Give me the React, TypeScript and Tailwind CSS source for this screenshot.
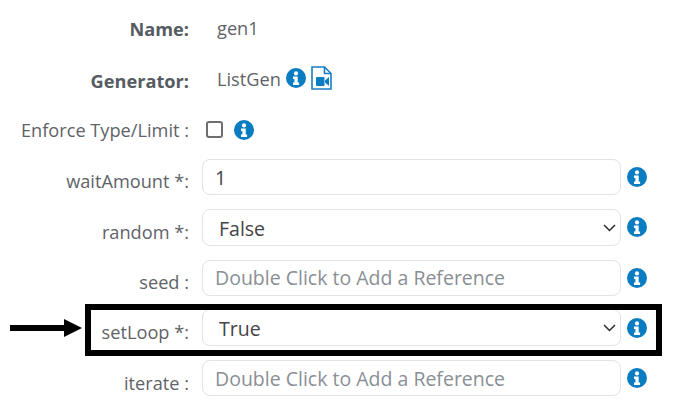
import React from 'react';

const Info = ({ className = '' }: { className?: string }) => (
  <svg viewBox="0 0 20 20" className={`w-[20px] h-[20px] shrink-0 ${className}`}>
    <circle cx="10" cy="10" r="10" fill="#0a7cc1" />
    <circle cx="10" cy="5.4" r="2.1" fill="white" />
    <path d="M7 8.6h4.7v6h1.4v2.3H7v-2.3h1.4v-3.7H7z" fill="white" />
  </svg>
);

const VideoFile = ({ className = '' }: { className?: string }) => (
  <svg viewBox="0 0 21 24" className={`w-[21px] h-[24px] shrink-0 ${className}`}>
    <path d="M1 1h12.5L20 7.5V23H1z" fill="white" stroke="#1a7cc4" strokeWidth="1.6" />
    <path d="M13.5 1v6.5H20" fill="none" stroke="#1a7cc4" strokeWidth="1.6" />
    <rect x="5" y="11" width="8.5" height="9" rx="1" fill="#0a7cc1" />
    <path d="M14 14.5l4-3.5v9l-4-3.5z" fill="#0a7cc1" />
  </svg>
);

const Label = ({ children, bold, field }: { children: React.ReactNode; bold?: boolean; field?: boolean }) => (
  <div className={`w-[189px] shrink-0 text-right ${field ? 'pt-[10px]' : ''} ${bold ? 'font-bold text-[#555b61]' : 'text-[#5f6368]'}`}>
    {children}
  </div>
);

const InputRow = ({ label, value, placeholder }: { label: string; value?: string; placeholder?: string }) => (
  <div className="flex items-center h-[36px] mb-[14.3px]">
    <Label field>{label}</Label>
    <input
      readOnly
      value={value}
      placeholder={placeholder}
      className="ml-[13px] w-[419px] h-[36px] rounded-[8px] border border-[#e3e3e3] bg-white px-[12px] text-[19.5px] text-[#444] placeholder:text-[#8a8f94] outline-none"
    />
    <Info className="ml-[6px]" />
  </div>
);

const SelectRow = ({ label, value }: { label: string; value: string }) => (
  <div className="flex items-center h-[36px] mb-[14.3px]">
    <Label field>{label}</Label>
    <div className="relative ml-[13px] w-[419px] h-[37px]">
      <select
        value={value}
        onChange={() => {}}
        className="w-full h-full appearance-none rounded-[8px] border border-[#e3e3e3] bg-white pl-[16px] pt-[2px] text-[19.5px] text-[#444] outline-none"
      >
        <option>True</option>
        <option>False</option>
      </select>
      <svg viewBox="0 0 13 8" className="absolute right-[5px] top-[15px] w-[13px] h-[8px]" fill="none" stroke="#2b2b2b" strokeWidth="1.5">
        <path d="M1 1 L6.5 6.5 L12 1" />
      </svg>
    </div>
    <Info className="ml-[6px]" />
  </div>
);

export default function App() {
  return (
    <div className="relative w-[673px] h-[415px] overflow-hidden bg-white text-[18.2px] font-['Open_Sans',sans-serif]">
      <div className="pt-[17px]">
        <div className="flex items-center h-[26px] mb-[26px]">
          <Label bold>Name:</Label>
          <span className="ml-[28px] -mt-[3px] text-[#5f6368]">gen1</span>
        </div>
        <div className="flex items-center h-[26px] mb-[23px]">
          <Label bold>Generator:</Label>
          <span className="ml-[28px] -mt-[4px] text-[#5f6368]">ListGen</span>
          <Info className="ml-[5px] -mt-[8px]" />
          <VideoFile className="ml-[5px] -mt-[8px]" />
        </div>
        <div className="flex items-center h-[26px] mb-[15px]">
          <Label>Enforce Type/Limit :</Label>
          <input
            type="checkbox"
            readOnly
            className="ml-[17px] -mt-[4px] w-[17px] h-[17px] appearance-none rounded-[3px] border-2 border-[#6e6e6e] bg-white"
          />
          <Info className="ml-[11px] -mt-[2px]" />
        </div>
        <InputRow label="waitAmount *:" value="1" />
        <SelectRow label="random *:" value="False" />
        <InputRow label="seed :" placeholder="Double Click to Add a Reference" />
        <SelectRow label="setLoop *:" value="True" />
        <InputRow label="iterate :" placeholder="Double Click to Add a Reference" />
      </div>

      {/* highlight box and arrow */}
      <div className="absolute left-[85px] top-[304px] w-[577px] h-[52px] border-[6px] border-black pointer-events-none" />
      <svg viewBox="0 0 72 18" className="absolute left-[10px] top-[319px] w-[72px] h-[18px]">
        <rect x="0" y="6" width="56" height="6" fill="black" />
        <polygon points="54,0 72,9 54,18" fill="black" />
      </svg>
    </div>
  );
}
